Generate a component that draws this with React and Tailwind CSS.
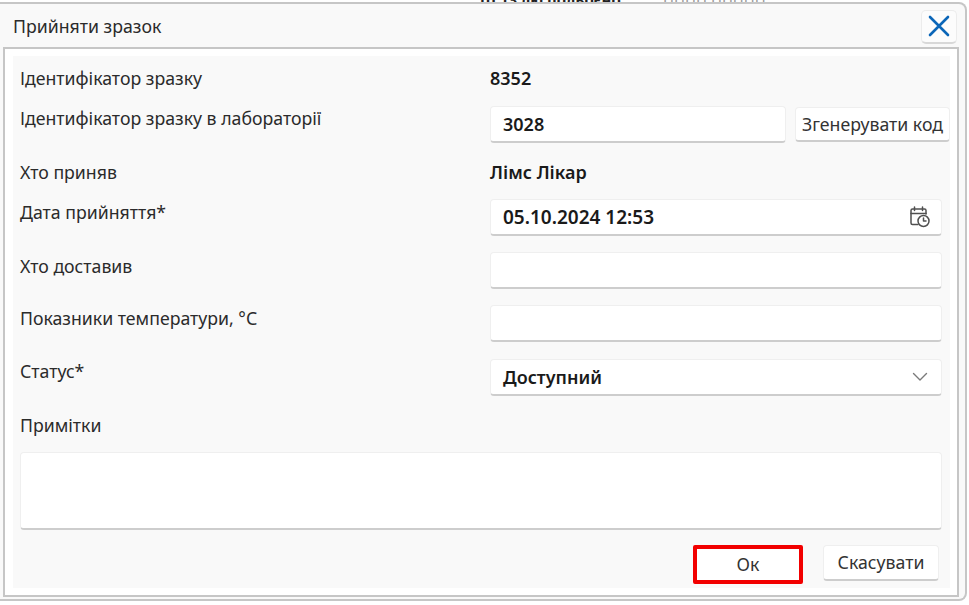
import React from "react";

const FONT = "font-['Noto_Sans','Open_Sans',sans-serif]";
const fieldBox =
  "bg-white rounded-[4px] border border-[#efefef] border-b-[2px] border-b-[#cdcdcd]";

function Row({ label, labelClass = "", className = "", children }) {
  return (
    <div className={`flex items-start ${className}`}>
      <div className={`w-[470px] shrink-0 leading-6 ${labelClass}`}>{label}</div>
      <div className="flex-1 min-w-0">{children}</div>
    </div>
  );
}

function Field({ value, className = "", valueClass = "", children }) {
  return (
    <div className={`${fieldBox} h-[37px] flex items-center justify-between pl-[12px] font-semibold text-[18px] text-[#1a1a1a] ${className}`}>
      <span className={valueClass}>{value}</span>
      {children}
    </div>
  );
}

export default function App() {
  return (
    <div className={`w-[969px] h-[605px] bg-white overflow-hidden text-[17.7px] text-[#2b2b2b] ${FONT}`}>
      <div className="h-[2px] overflow-hidden flex pl-[480px] text-[15px] leading-[8px]">
        <span className="-mt-[5px] w-[153px] whitespace-nowrap font-bold text-[#222]">Ш 13 лю подвоєно</span>
        <span className="-mt-[5px] ml-[30px] whitespace-nowrap text-[#999]">ПППП ППППП</span>
      </div>
      <div className="w-[967px] h-[599px] bg-[#f9f9f9] border-y-[2px] border-r-[2px] border-[#c6c6c6] rounded-r-[8px] flex flex-col">
        <div className="h-[43px] shrink-0 flex items-center justify-between pl-[13px] pr-[8px]">
          <span className="mt-[2px]">Прийняти зразок</span>
          <button className="w-[36px] h-[34px] mt-[2px] bg-[#fcfcfc] rounded-[5px] border border-[#ececec] border-b-[2px] border-b-[#d8d8d8] flex items-center justify-center">
            <svg width="24" height="24" viewBox="0 0 24 24" fill="none" stroke="#0b66b8" strokeWidth="2.6" strokeLinecap="round">
              <path d="M3 3 L21 21 M21 3 L3 21" />
            </svg>
          </button>
        </div>
        <div className="ml-[3px] mr-[6px] h-[550px] shrink-0 bg-white border-[2px] border-[#c6c6c6] pl-[8px] pr-[7px] py-[7px] flex">
          <div className="flex-1 bg-[#f9f9f9] pl-[7px] pr-[8px] flex flex-col">
            <Row className="mt-[10px]" label="Ідентифікатор зразку">
              <div className="leading-6 font-semibold text-[18px] text-[#1a1a1a]">8352</div>
            </Row>
            <Row className="mt-[16px]" label="Ідентифікатор зразку в лабораторії">
              <div className="flex items-start gap-[9px]">
                <Field value="3028" className="w-[296px] shrink-0" />
                <button className={`${fieldBox} w-[155px] h-[35px] shrink-0 mt-px -mr-[8px] flex items-center justify-center text-[#333] whitespace-nowrap`}>
                  Згенерувати код
                </button>
              </div>
            </Row>
            <Row className="mt-[17px]" label="Хто приняв">
              <div className="leading-6 font-semibold text-[18px] text-[#1a1a1a]">Лімс Лікар</div>
            </Row>
            <Row className="mt-[15px]" label="Дата прийняття*" labelClass="pt-px">
              <Field value="05.10.2024 12:53" valueClass="text-[19px]" className="pr-[10px]">
                <svg width="22" height="22" viewBox="0 0 22 22" fill="none" stroke="#505050" strokeWidth="1.5" strokeLinecap="round" strokeLinejoin="round">
                  <path d="M9 18.500 H3.500 A1.500 1.500 0 0 1 2 17 V4.500 A1.500 1.500 0 0 1 3.500 3 H15.500 A1.500 1.500 0 0 1 17 4.500 V8" />
                  <path d="M2 7.500 H17 M5.500 1 V4.500 M13.500 1 V4.500" />
                  <circle cx="14.500" cy="15" r="5.500" />
                  <path d="M14.500 12 V15 H17" />
                </svg>
              </Field>
            </Row>
            <Row className="mt-[16px]" label="Хто доставив" labelClass="pt-[2px]">
              <Field value="" />
            </Row>
            <Row className="mt-[16px]" label="Показники температури, °С" labelClass="pt-px">
              <Field value="" />
            </Row>
            <Row className="mt-[17px]" label="Статус*">
              <Field value="Доступний" className="pr-[13px]">
                <svg width="16" height="10" viewBox="0 0 16 10" fill="none" stroke="#7a7a7a" strokeWidth="1.4" strokeLinecap="round" strokeLinejoin="round">
                  <path d="M1.500 1.500 L8 8 L14.500 1.500" />
                </svg>
              </Field>
            </Row>
            <div className="mt-[17px] leading-6">Примітки</div>
            <div className={`${fieldBox} mt-[15px] h-[78px]`} />
            <div className="mt-[15px] flex items-start justify-end gap-[20px] pr-[3px]">
              <button className="w-[110px] h-[39px] bg-white border-[4px] border-[#f20000] rounded-[2px] flex items-center justify-center text-[#333]">
                Ок
              </button>
              <button className={`${fieldBox} w-[116px] h-[36px] flex items-center justify-center text-[#333]`}>
                Скасувати
              </button>
            </div>
          </div>
        </div>
      </div>
    </div>
  );
}
